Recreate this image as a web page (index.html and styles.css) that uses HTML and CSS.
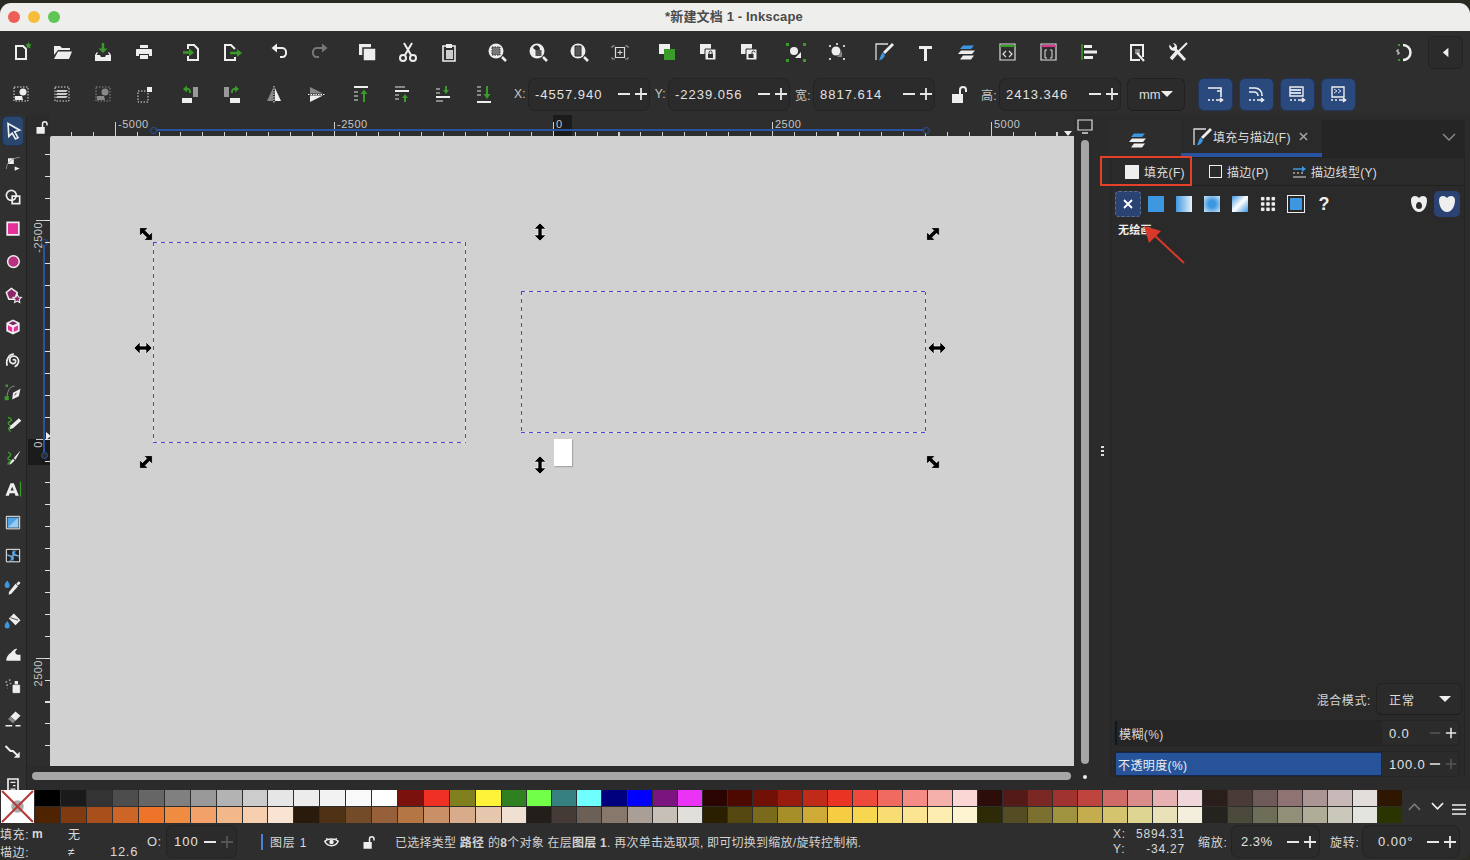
FILE: index.html
```html
<!DOCTYPE html>
<html lang="zh">
<head>
<meta charset="utf-8">
<title>Inkscape</title>
<link rel="stylesheet" href="styles.css">
</head>
<body>
<svg class="sprite" aria-hidden="true">
  <symbol id="minus" viewBox="0 0 14 14"><path d="M1 7h12" stroke="currentColor" stroke-width="1.800"/></symbol>
  <symbol id="plus" viewBox="0 0 14 14"><path d="M1 7h12M7 1v12" stroke="currentColor" stroke-width="1.800"/></symbol>
  <symbol id="caret" viewBox="0 0 12 8"><path d="M0 1h12L6 7z" fill="currentColor"/></symbol>
  <symbol id="harrow" viewBox="0 0 20 20"><path d="M1 10l6-6v4h6V4l6 6-6 6v-4H7v4z" fill="#000" stroke="#fff" stroke-width=".6"/></symbol>
  <symbol id="lock" viewBox="0 0 24 24"><path d="M6 12h11v9H6z" fill="#eee"/><path d="M14 12V8a3 3 0 0 1 6 0v2" fill="none" stroke="#eee" stroke-width="2"/></symbol>
  <symbol id="objects" viewBox="0 0 24 24"><path d="M6 9l3-3.500h11l-3 3.500z" fill="#3d97e0"/><path d="M4 14l3-3.500h14l-3 3.500z" fill="#eee"/><path d="M6 19.500l3-4h11l-3 4z" fill="#eee"/></symbol>
  <symbol id="fillstroke" viewBox="0 0 24 24"><path d="M16 4H4v16" fill="none" stroke="#ddd" stroke-width="1.300"/><path d="M20 3l2 2-9 9-2-2z" fill="#eee"/><path d="M10.500 12.500l2.500 2.500c-1 3-3 5-6 5.500 1-2 1.500-5.500 3.500-8z" fill="#3d97e0"/></symbol>
  <symbol id="bluepath" viewBox="0 0 24 24"><path d="M5 6h10l3 0v9M14 9h4v0" fill="none" stroke="#eee" stroke-width="1.600"/><path d="M5 18h2M9 18h2M13 18h6m-2-2l2.500 2-2.500 2" fill="none" stroke="#eee" stroke-width="1.600"/></symbol>
</svg>

<div class="window">
  <header class="titlebar">
    <div class="lights"><i class="light red"></i><i class="light yellow"></i><i class="light green"></i></div>
    <div class="title">*新建文档 1 - Inkscape</div>
  </header>

  <div class="toolbar tb1">
    <div class="grp">
      <span class="cell"><svg class="ic" viewBox="0 0 24 24"><path d="M7 6h7l3 3v10H7z" fill="#2e2e2e" stroke="#eee" stroke-width="2"/><path d="M19.500 2l1 2.200 2.300.3-1.700 1.600.4 2.400-2-1.100-2 1.100.4-2.400L16 4.500l2.300-.3z" fill="#3a9a2a"/></svg></span>
      <span class="cell"><svg class="ic" viewBox="0 0 24 24"><path d="M4 6h6l2 2h8v2H8l-4 5z" fill="#eee"/><path d="M8 11.500h14L19 19H4z" fill="#eee"/></svg></span>
      <span class="cell"><svg class="ic" viewBox="0 0 24 24"><path d="M12 3v8" stroke="#3a9a2a" stroke-width="2.500"/><path d="M7.500 8.500h9L12 13z" fill="#3a9a2a"/><path d="M6 12l-2 3v6h16v-6l-2-3-1 1 1.500 2H15l-1 2h-4l-1-2H5.500L7 13z" fill="#eee"/></svg></span>
      <span class="cell"><svg class="ic" viewBox="0 0 24 24"><path d="M8 5h8v3H8z" fill="#eee"/><path d="M5 9h14a1 1 0 0 1 1 1v6h-3v-2H7v2H4v-6a1 1 0 0 1 1-1z" fill="#eee"/><path d="M8 15h8v4H8z" fill="#eee"/></svg></span>
    </div>
    <div class="grp">
      <span class="cell"><svg class="ic" viewBox="0 0 24 24"><path d="M9 9V5h6l4 4v11H9v-4" fill="none" stroke="#eee" stroke-width="2"/><path d="M4 12.500h7" stroke="#3a9a2a" stroke-width="2.500"/><path d="M10 8.500l5 4-5 4z" fill="#3a9a2a"/></svg></span>
      <span class="cell"><svg class="ic" viewBox="0 0 24 24"><path d="M15 9V9l-4-4H5v15h10v-3" fill="none" stroke="#eee" stroke-width="2"/><path d="M10 13h8" stroke="#3a9a2a" stroke-width="2.500"/><path d="M17 9l5 4-5 4z" fill="#3a9a2a"/></svg></span>
    </div>
    <div class="grp">
      <span class="cell"><svg class="ic" viewBox="0 0 24 24"><path d="M9 8h6a4 4 0 0 1 4 4 4 4 0 0 1-4 5h-2" fill="none" stroke="#eee" stroke-width="2"/><path d="M10 3.500v9L4.500 8z" fill="#eee"/></svg></span>
      <span class="cell dim"><svg class="ic" viewBox="0 0 24 24"><path d="M15 8H9a4 4 0 0 0-4 4 4 4 0 0 0 4 5h2" fill="none" stroke="#777" stroke-width="2"/><path d="M14 3.500v9L19.500 8z" fill="#777"/></svg></span>
    </div>
    <div class="grp">
      <span class="cell"><svg class="ic" viewBox="0 0 24 24"><path d="M4 4h12v11H4z" fill="#eee"/><path d="M8 8h13v13H8z" fill="#eee" stroke="#2e2e2e" stroke-width="1.500"/></svg></span>
      <span class="cell"><svg class="ic" viewBox="0 0 24 24"><path d="M8 3l7 12M16 3L9 15" stroke="#eee" stroke-width="2"/><circle cx="7" cy="18" r="3" fill="none" stroke="#eee" stroke-width="2"/><circle cx="17" cy="18" r="3" fill="none" stroke="#eee" stroke-width="2"/></svg></span>
      <span class="cell"><svg class="ic" viewBox="0 0 24 24"><path d="M9 6H6v15h12V6h-3" fill="none" stroke="#eee" stroke-width="1.600"/><path d="M9 4h6v4H9z" fill="#eee"/><path d="M9 10h7v9H9z" fill="#ccc"/></svg></span>
    </div>
    <div class="grp">
      <span class="cell"><svg class="ic" viewBox="0 0 24 24"><circle cx="11" cy="11" r="7.500" fill="#eee"/><path d="M17 17l4 4" stroke="#eee" stroke-width="2.500"/><path d="M7 7h8v8H7z" fill="#777" stroke="#2e2e2e" stroke-dasharray="1.500 1"/></svg></span>
      <span class="cell"><svg class="ic" viewBox="0 0 24 24"><circle cx="11" cy="11" r="7.500" fill="#eee"/><path d="M17 17l4 4" stroke="#eee" stroke-width="2.500"/><path d="M7 8a3.500 3.500 0 1 1 5 4z" fill="#2e2e2e"/><path d="M9.500 10h6v6h-6z" fill="#555"/></svg></span>
      <span class="cell"><svg class="ic" viewBox="0 0 24 24"><circle cx="11" cy="11" r="7.500" fill="#eee"/><path d="M17 17l4 4" stroke="#eee" stroke-width="2.500"/><path d="M8 6h6v10H8z" fill="#555" stroke="#2e2e2e"/></svg></span>
      <span class="cell"><svg class="ic" viewBox="0 0 24 24"><path d="M7 6H4v2M17 6h3v2M7 19H4v-2M17 19h3v-2" fill="none" stroke="#999"/><path d="M7.500 7.500h9v10h-9z" fill="none" stroke="#ddd" stroke-width="1.200"/><path d="M12 10v5M9.500 12.500h5" stroke="#ddd"/></svg></span>
    </div>
    <div class="grp">
      <span class="cell"><svg class="ic" viewBox="0 0 24 24"><path d="M4 4h11v10H4z" fill="#eee"/><path d="M9 9h11v11H9z" fill="#3a9a2a"/></svg></span>
      <span class="cell"><svg class="ic" viewBox="0 0 24 24"><path d="M4 4h11v10H4z" fill="#eee"/><path d="M9 9h11v11H9z" fill="#eee" stroke="#2e2e2e"/><path d="M12 14h5v4h-5z" fill="#2e2e2e"/><path d="M13 14v-1.500a1.500 1.500 0 0 1 3 0V14" fill="none" stroke="#2e2e2e"/></svg></span>
      <span class="cell"><svg class="ic" viewBox="0 0 24 24"><path d="M4 4h11v10H4z" fill="#eee"/><path d="M9 9h11v11H9z" fill="#eee" stroke="#2e2e2e"/><path d="M11.500 14h5v4h-5z" fill="#2e2e2e"/><path d="M15 14v-1.500a1.500 1.500 0 0 1 3 0" fill="none" stroke="#2e2e2e"/></svg></span>
    </div>
    <div class="grp">
      <span class="cell"><svg class="ic" viewBox="0 0 24 24"><path d="M2 3h3v3H2zM19 3h3v3h-3zM2 19h3v3H2zM19 19h3v3h-3z" fill="#3a9a2a"/><circle cx="10" cy="11" r="4" fill="#eee"/><path d="M11 18l6-6v6z" fill="#eee"/></svg></span>
      <span class="cell"><svg class="ic" viewBox="0 0 24 24"><path d="M4 5h2v2H4zM18 5h2v2h-2zM4 18h2v2H4zM18 18h2v2h-2zM11 3h2v2h-2z" fill="#ccc"/><circle cx="11" cy="11" r="4.500" fill="#eee"/><path d="M12 17l5-6v6z" fill="#888"/></svg></span>
    </div>
    <div class="grp">
      <span class="cell"><svg class="ic" viewBox="0 0 24 24"><use href="#fillstroke"/></svg></span>
      <span class="cell"><svg class="ic" viewBox="0 0 24 24"><path d="M6 6h13v3h-5v12h-3V9H6z" fill="#eee"/></svg></span>
      <span class="cell"><svg class="ic" viewBox="0 0 24 24"><use href="#objects"/></svg></span>
      <span class="cell"><svg class="ic" viewBox="0 0 24 24"><path d="M5 4h15v16H5z" fill="none" stroke="#ddd" stroke-width="1.200"/><path d="M5 5h15v2H5z" fill="#3a9a2a"/><path d="M11 11l-3 3 3 3M14 11l3 3-3 3" fill="none" stroke="#ddd" stroke-width="1.200"/></svg></span>
      <span class="cell"><svg class="ic" viewBox="0 0 24 24"><path d="M5 4h15v16H5z" fill="none" stroke="#ddd" stroke-width="1.200"/><path d="M5 5h15v2H5z" fill="#e0348c"/><path d="M11 10H9v8h2M14 10h2v8h-2" fill="none" stroke="#ddd"/></svg></span>
      <span class="cell"><svg class="ic" viewBox="0 0 24 24"><path d="M5 4v16" stroke="#3a9a2a" stroke-width="1.500"/><path d="M7 5h8v3H7zM7 10.500h13v3H7zM7 16h9v3H7z" fill="#eee"/></svg></span>
    </div>
    <div class="grp">
      <span class="cell"><svg class="ic" viewBox="0 0 24 24"><path d="M15 20H6V5h12v12" fill="none" stroke="#eee" stroke-width="2"/><path d="M10 9h5v5h-5z" fill="#888"/><path d="M12 13l7 8" stroke="#eee" stroke-width="2"/></svg></span>
      <span class="cell"><svg class="ic" viewBox="0 0 24 24"><path d="M8 8l11 12" stroke="#eee" stroke-width="3"/><path d="M3.500 4.500a4.500 4.500 0 0 0 5.500 6l2-2a4.500 4.500 0 0 0-4-5.500l2 3-2.500 2z" fill="#eee"/><path d="M21 3l-10 10" stroke="#eee" stroke-width="2"/><path d="M11 12L5 19" stroke="#eee" stroke-width="3.500"/></svg></span>
    </div>
    <span class="tb-spring"></span>
    <span class="cell snap"><svg class="ic" viewBox="0 0 24 24"><path d="M11 5a7.500 7.500 0 1 1 0 15" fill="none" stroke="#eee" stroke-width="2.500"/><path d="M6 4h2v2H6zM6 19h2v2H6z" fill="#3a9a2a"/><path d="M7 10H5v2h2v2H5" fill="none" stroke="#ddd"/></svg></span>
    <span class="side-btn"><svg class="tri" viewBox="0 0 10 12"><path d="M8 0v12L1 6z" fill="#eee"/></svg></span>
  </div>

  <div class="toolbar tb2">
    <div class="grp">
      <span class="cell"><svg class="ic" viewBox="0 0 24 24"><path d="M5 5h14v14H5z" fill="none" stroke="#ddd" stroke-dasharray="1.500 1.500"/><circle cx="14" cy="10" r="3.500" fill="#eee"/><path d="M6 14h7l1 4H6z" fill="#eee"/></svg></span>
      <span class="cell"><svg class="ic" viewBox="0 0 24 24"><path d="M5 5h14v14H5z" fill="none" stroke="#ddd" stroke-dasharray="1.500 1.500"/><path d="M7 8h11l-2 2H6zM7 11h11l-2 2H6zM7 14h11l-2 2H6z" fill="#ccc"/></svg></span>
      <span class="cell dim"><svg class="ic" viewBox="0 0 24 24"><path d="M5 5h14v14H5z" fill="none" stroke="#888" stroke-dasharray="1.500 1.500"/><circle cx="14" cy="10" r="3.500" fill="#888"/><path d="M6 14h7l1 4H6z" fill="#888"/></svg></span>
      <span class="cell"><svg class="ic" viewBox="0 0 24 24"><path d="M6 9h10v11H6z" fill="none" stroke="#ddd" stroke-dasharray="1.500 1.500"/><path d="M15 5h5v5h-5z" fill="#eee"/></svg></span>
    </div>
    <div class="grp g-wide">
      <span class="cell c42"><svg class="ic" viewBox="0 0 24 24"><path d="M15 5h5v10h-5z" fill="#999"/><path d="M4 16h10v5H4z" fill="#eee"/><path d="M12 11V9.500A2.500 2.500 0 0 0 9 7" fill="none" stroke="#3a9a2a" stroke-width="2"/><path d="M9 3.500v7L5 7z" fill="#3a9a2a"/></svg></span>
      <span class="cell c42"><svg class="ic" viewBox="0 0 24 24"><path d="M4 5h5v10H4z" fill="#999"/><path d="M10 16h10v5H10z" fill="#eee"/><path d="M12 11V9.500A2.500 2.500 0 0 1 15 7" fill="none" stroke="#3a9a2a" stroke-width="2"/><path d="M15 3.500v7L19 7z" fill="#3a9a2a"/></svg></span>
      <span class="cell c42"><svg class="ic" viewBox="0 0 24 24"><path d="M11 6v13H5z" fill="#888"/><path d="M13 6v13h6z" fill="#eee"/><path d="M12 4v17" stroke="#eee" stroke-dasharray="1.500 1"/></svg></span>
      <span class="cell"><svg class="ic" viewBox="0 0 24 24"><path d="M6 5l13 6.500H6z" fill="#888"/><path d="M6 13.500h13L6 20z" fill="#eee"/><path d="M4 12.500h17" stroke="#eee" stroke-dasharray="1.500 1"/></svg></span>
    </div>
    <div class="grp">
      <span class="cell"><svg class="ic" viewBox="0 0 24 24"><path d="M5 4h14v2H5z" fill="#eee"/><path d="M5 9h4v2H5zM5 13h4v2H5zM5 17h4v2H5z" fill="#888"/><path d="M15 20v-9" stroke="#3a9a2a" stroke-width="2"/><path d="M11.500 12L15 7.500l3.500 4.500z" fill="#3a9a2a"/></svg></span>
      <span class="cell"><svg class="ic" viewBox="0 0 24 24"><path d="M5 8h14v2H5z" fill="#eee"/><path d="M5 4h10v2H5zM5 12h4v2H5zM5 16h4v2H5z" fill="#888"/><path d="M15 20v-5" stroke="#3a9a2a" stroke-width="2"/><path d="M12 16l3-4 3 4z" fill="#3a9a2a"/></svg></span>
      <span class="cell"><svg class="ic" viewBox="0 0 24 24"><path d="M5 14h14v2H5z" fill="#eee"/><path d="M5 6h4v2H5zM5 10h4v2H5zM5 18h7v2H5z" fill="#888"/><path d="M15 4v5" stroke="#3a9a2a" stroke-width="2"/><path d="M12 8l3 4 3-4z" fill="#3a9a2a"/></svg></span>
      <span class="cell"><svg class="ic" viewBox="0 0 24 24"><path d="M5 19h14v2H5z" fill="#eee"/><path d="M5 4h4v2H5zM5 8h4v2H5zM5 12h4v2H5z" fill="#888"/><path d="M15 4v9" stroke="#3a9a2a" stroke-width="2"/><path d="M11.500 12l3.500 5 3.500-5z" fill="#3a9a2a"/></svg></span>
    </div>
    <span class="flabel fl-x">X:</span>
    <div class="spin sp-coord"><span class="val">-4557.940</span><svg class="pm"><use href="#minus"/></svg><svg class="pm"><use href="#plus"/></svg></div>
    <span class="flabel fl-y">Y:</span>
    <div class="spin sp-coord"><span class="val">-2239.056</span><svg class="pm"><use href="#minus"/></svg><svg class="pm"><use href="#plus"/></svg></div>
    <span class="flabel fl-w">宽:</span>
    <div class="spin sp-coord"><span class="val">8817.614</span><svg class="pm"><use href="#minus"/></svg><svg class="pm"><use href="#plus"/></svg></div>
    <span class="lockcell"><svg class="ic"><use href="#lock"/></svg></span>
    <span class="flabel fl-h">高:</span>
    <div class="spin sp-coord"><span class="val">2413.346</span><svg class="pm"><use href="#minus"/></svg><svg class="pm"><use href="#plus"/></svg></div>
    <div class="dropdown dd-mm"><span>mm</span><svg class="caret"><use href="#caret"/></svg></div>
    <div class="bluebtns">
      <span class="bluebtn"><svg class="ic" viewBox="0 0 24 24"><use href="#bluepath"/></svg></span>
      <span class="bluebtn"><svg class="ic" viewBox="0 0 24 24"><path d="M5 6h6a7 7 0 0 1 7 7v1M5 10h5a4 4 0 0 1 4 4" fill="none" stroke="#eee" stroke-width="1.600"/><path d="M5 18h2M9 18h2M13 18h6m-2-2l2.500 2-2.500 2" fill="none" stroke="#eee" stroke-width="1.600"/></svg></span>
      <span class="bluebtn"><svg class="ic" viewBox="0 0 24 24"><path d="M5 5h13v9H5z" fill="none" stroke="#eee" stroke-width="1.400"/><path d="M5 7h11v2H5zM5 10h11v2H5z" fill="#cfd8e8"/><path d="M5 18h2M9 18h2M13 18h6m-2-2l2.500 2-2.500 2" fill="none" stroke="#eee" stroke-width="1.600"/></svg></span>
      <span class="bluebtn"><svg class="ic" viewBox="0 0 24 24"><path d="M6 5h12v10H6z" fill="none" stroke="#eee" stroke-width="1.400"/><path d="M8 7l3 2-3 2M12 7l3 2-3 2" fill="none" stroke="#cfd8e8"/><path d="M5 18h2M9 18h2M13 18h6m-2-2l2.500 2-2.500 2" fill="none" stroke="#eee" stroke-width="1.600"/></svg></span>
    </div>
  </div>

  <div class="middle">
    <nav class="toolbox">
      <span class="tool active"><svg class="ic" viewBox="0 0 24 24"><path d="M6 3l14 8-6 2 4 7-3 1.500-4-7-4 4z" fill="#1f3a66" stroke="#eee" stroke-width="2"/></svg></span>
      <span class="tool"><svg class="ic" viewBox="0 0 24 24"><path d="M6 5h7v7H6z" fill="#eee"/><path d="M4 18c0-7 6-13 16-14" fill="none" stroke="#999"/><path d="M14 15l6 2.500-6 2.500z" fill="#eee"/></svg></span>
      <span class="tool"><svg class="ic" viewBox="0 0 24 24"><circle cx="10" cy="10" r="6" fill="none" stroke="#eee" stroke-width="2"/><path d="M11 11h9v9h-9z" fill="none" stroke="#eee" stroke-width="2"/></svg></span>
      <span class="tool"><svg class="ic" viewBox="0 0 24 24"><path d="M5 4h14v15H5z" fill="#e7319a" stroke="#eee" stroke-width="2"/></svg></span>
      <span class="tool"><svg class="ic" viewBox="0 0 24 24"><circle cx="12.500" cy="11.500" r="7" fill="#b93080" stroke="#eee" stroke-width="1.800"/></svg></span>
      <span class="tool"><svg class="ic" viewBox="0 0 24 24"><path d="M10 4l7 5-3 8H7L4 9z" fill="#8c2768" stroke="#eee" stroke-width="1.800"/><path d="M17 11l1.500 3.500 3.500.5-2.500 2.500.6 3.500-3.100-1.700-3.100 1.700.6-3.500L12 15l3.500-.5z" fill="#8c2768" stroke="#eee" stroke-width="1.300"/></svg></span>
      <span class="tool"><svg class="ic" viewBox="0 0 24 24"><path d="M12 3l8 4v10l-8 4-8-4V7z" fill="#eee"/><path d="M12 5l5 2.500-5 2.500-5-2.500z" fill="#7d2560"/><path d="M6 10l5 2.500V18l-5-2.500zM18 10l-5 2.500V18l5-2.500z" fill="#e7319a"/></svg></span>
      <span class="tool"><svg class="ic" viewBox="0 0 24 24"><path d="M12 12.500c1-2 4-.5 3 2-1.500 3-7 2-7-2.500 0-5 6-6 9-3 3 3.500 2 9-3 11M5 19C3 12 7 5 13 5" fill="none" stroke="#eee" stroke-width="2"/></svg></span>
      <span class="tool"><svg class="ic" viewBox="0 0 24 24"><path d="M5 18c0-7 3-13 9-13" fill="none" stroke="#999"/><path d="M2 17h5v5H2zM3 3h3v3H3z" fill="#3a9a2a"/><path d="M21 8l-2 9-8 4 1-8z" fill="#eee"/><path d="M14 16l2-3" stroke="#2e2e2e"/></svg></span>
      <span class="tool"><svg class="ic" viewBox="0 0 24 24"><path d="M6 3c4 1 6 3 2 5s0 5 3 5-6 1-4 4 2 3 2 3" fill="none" stroke="#3a9a2a" stroke-width="1.600"/><path d="M19 4l3 3-10 9-4 1 1-4z" fill="#eee"/></svg></span>
      <span class="tool"><svg class="ic" viewBox="0 0 24 24"><path d="M6 5c4 2 4 4 1 6s0 3 3 4-5 1-4 5" fill="none" stroke="#3a9a2a" stroke-width="1.600"/><path d="M21 3l-8 9 2 2zM12 13l2 2-4 4-3 1 2-3z" fill="#eee"/></svg></span>
      <span class="tool"><svg class="ic" viewBox="0 0 24 24"><path d="M9 4h4l6 15h-4l-1-3H8l-1 3H3zM9 12.500h4L11 8z" fill="#eee" fill-rule="evenodd"/><path d="M21 2v18" stroke="#3a9a2a" stroke-width="1.500"/></svg></span>
      <span class="tool"><svg class="ic" viewBox="0 0 24 24"><path d="M4 4h16v15H4z" fill="#2e2e2e" stroke="#eee" stroke-width="1.200"/><rect x="5.500" y="5.500" width="13" height="12" fill="#4fa4e8"/><path d="M5.500 17.500h13v-12z" fill="#d4e8f7" opacity=".55"/></svg></span>
      <span class="tool"><svg class="ic" viewBox="0 0 24 24"><path d="M4 4h16v15H4z" fill="#222" stroke="#eee" stroke-width="1.200"/><path d="M12 11c-3-4 1-6 5-6-3 1-3 4-1 5s3 3 3 5c-1-3-4-4-7-4zM12 12c3 4-1 6-5 6 3-1 3-4 1-5s-3-3-3-5c1 3 4 4 7 4z" fill="#3d97e0"/><path d="M4 11.500h16M12 4v15" stroke="#eee" stroke-width=".5"/></svg></span>
      <span class="tool"><svg class="ic" viewBox="0 0 24 24"><path d="M5 3c2 3 3 4 3 6a3 3 0 0 1-6 0c0-2 1-3 3-6z" fill="#3d97e0"/><path d="M19 4l2 2-3 3-2-2zM15 7l3 3-8 9-3 1 0-3z" fill="#eee"/></svg></span>
      <span class="tool"><svg class="ic" viewBox="0 0 24 24"><path d="M13 3l8 8-6 6-8-8z" fill="#eee"/><path d="M9 8l9 3" stroke="#2e2e2e"/><path d="M5 12c2 3 3 4 3 6a3 3 0 0 1-6 0c0-2 1-3 3-6z" fill="#3d97e0"/></svg></span>
      <span class="tool"><svg class="ic" viewBox="0 0 24 24"><path d="M4 20c0-6 4-8 6-10 2-3 6-5 7-4-1 2-3 2-2 5 1 2 4 2 6 2v7z" fill="#eee"/></svg></span>
      <span class="tool"><svg class="ic" viewBox="0 0 24 24"><path d="M3 6h2v2H3zM7 4h2v2H7zM4 10h2v2H4zM8 8h2v2H8zM5 14h1v1H5z" fill="#999"/><path d="M12 11h8v9h-8z" fill="#eee" stroke="#eee"/><path d="M14 6h4v4h-4z" fill="#eee"/></svg></span>
      <span class="tool"><svg class="ic" viewBox="0 0 24 24"><path d="M15 3l6 5-6 6-6-5z" fill="#eee"/><path d="M9 9l6 5-3 3-6-5z" fill="#888"/><path d="M3 20h8M15 20h6" stroke="#eee" stroke-width="1.800"/></svg></span>
      <span class="tool"><svg class="ic" viewBox="0 0 24 24"><path d="M3 6l6 6h3l5 5" fill="none" stroke="#eee" stroke-width="2.400"/><path d="M20 13v7h-7z" fill="#eee"/></svg></span>
      <span class="tool"><svg class="ic" viewBox="0 0 24 24"><path d="M6 22V6h12v16" fill="none" stroke="#eee" stroke-width="2"/><path d="M9 10h6M12 14h3M9 18h6" stroke="#eee" stroke-width="1.500"/></svg></span>
    </nav>

    <div class="workspace">
      <div class="corner"><svg class="ic-sm" viewBox="0 0 24 24"><use href="#lock"/></svg></div>
      <div class="ruler-top">
        <span class="zero-h"></span>
        <span class="major mj1"></span><span class="major mj2"></span><span class="major mj3"></span><span class="major mj4"></span><span class="major mj5"></span>
        <span class="rtext rt1">-5000</span><span class="rtext rt2">-2500</span><span class="rtext rt3">0</span><span class="rtext rt4">2500</span><span class="rtext rt5">5000</span>
        <span class="sel-h"></span><i class="knob kh1"></i><i class="knob kh2"></i>
        <span class="mark-top"></span>
      </div>
      <div class="monitor"><svg class="ic" viewBox="0 0 24 24"><path d="M5 5h14v10H5z" fill="none" stroke="#ddd" stroke-width="1.200"/><path d="M9 18h6" stroke="#ddd" stroke-width="1.500"/></svg></div>
      <div class="ruler-left">
        <span class="zero-v"></span>
        <span class="majorv mv1"></span><span class="majorv mv2"></span><span class="majorv mv3"></span>
        <span class="vtext vt1">-2500</span><span class="vtext vt2">0</span><span class="vtext vt3">2500</span>
        <span class="sel-v"></span><i class="knob kv1"></i><i class="knob kv2"></i>
        <span class="mark-left"></span>
        <span class="vticks"></span>
      </div>
      <main class="canvas">
        <div class="sel sel1"></div>
        <div class="sel sel2"></div>
        <div class="page"></div>
        <svg class="handle hd-nw r45"><use href="#harrow"/></svg>
        <svg class="handle hd-n r90"><use href="#harrow"/></svg>
        <svg class="handle hd-ne rn45"><use href="#harrow"/></svg>
        <svg class="handle hd-w"><use href="#harrow"/></svg>
        <svg class="handle hd-e"><use href="#harrow"/></svg>
        <svg class="handle hd-sw rn45"><use href="#harrow"/></svg>
        <svg class="handle hd-s r90"><use href="#harrow"/></svg>
        <svg class="handle hd-se r45"><use href="#harrow"/></svg>
      </main>
      <div class="vscroll-col"><span class="vthumb"></span><span class="grip"></span></div>
      <div class="hscroll-row"><span class="hthumb"></span><span class="sdot"></span></div>
    </div>

    <aside class="dock">
      <div class="dock-tabs">
        <span class="dtab dtab-icon"><svg class="ic" viewBox="0 0 24 24"><use href="#objects"/></svg></span>
        <span class="dtab dtab-active"><svg class="ic" viewBox="0 0 24 24"><use href="#fillstroke"/></svg><span>填充与描边(F)</span><svg class="xclose" viewBox="0 0 10 10"><path d="M1 1l8 8M9 1l-8 8" stroke="#aaa" stroke-width="1.500"/></svg></span>
        <span class="dock-fill"><svg class="chev" viewBox="0 0 14 8"><path d="M1 1l6 6 6-6" fill="none" stroke="#888" stroke-width="1.500"/></svg></span>
      </div>
      <div class="pane">
        <div class="subtabs">
          <span class="stab st1"><i class="sq-fill"></i>填充(F)</span>
          <span class="stab st2"><i class="sq-stroke"></i>描边(P)</span>
          <span class="stab st3"><svg class="st-ic" viewBox="0 0 14 12"><path d="M1 11h13" stroke="#ddd" stroke-width="1.200"/><path d="M1 7h2M5 7h2M9 7h2" stroke="#eee" stroke-width="1.200"/><path d="M1 3h10" stroke="#3d97e0" stroke-width="1.300"/><path d="M10 0l4 3-4 3z" fill="#3d97e0"/></svg>描边线型(Y)</span>
        </div>
        <div class="modes">
          <span class="mode-x"><svg viewBox="0 0 10 10" class="mx"><path d="M1 1l8 8M9 1l-8 8" stroke="#fff" stroke-width="1.800"/></svg></span>
          <span class="mode"><i class="pm-flat"></i></span>
          <span class="mode"><i class="pm-linear"></i></span>
          <span class="mode"><i class="pm-radial"></i></span>
          <span class="mode"><i class="pm-mesh"></i></span>
          <span class="mode"><i class="pm-pattern"></i></span>
          <span class="mode"><i class="pm-swatch"></i></span>
          <span class="mode pm-unset">?</span>
          <span class="mode-spring"></span>
          <span class="rule-a"><svg class="rule-ic" viewBox="0 0 20 20"><path fill-rule="evenodd" d="M10 4c2-3 8-3 8 2 0 6-3 12-8 12S2 12 2 6c0-5 6-5 8-2zM10 8c-2 0-3 2-3 4s1 3 3 3 3-1 3-3-1-4-3-4z" fill="#eee"/></svg></span>
          <span class="rule-b"><svg class="rule-ic" viewBox="0 0 20 20"><path d="M10 4c2-3 8-3 8 2 0 6-3 12-8 12S2 12 2 6c0-5 6-5 8-2z" fill="#eee"/></svg></span>
        </div>
        <div class="nopaint">无绘画</div>
        <div class="pane-spring"></div>
        <div class="blend">
          <span class="blend-label">混合模式:</span>
          <div class="dropdown dd-blend"><span>正常</span><svg class="caret"><use href="#caret"/></svg></div>
        </div>
        <div class="slider">
          <div class="slide-bar bar-off"><span>模糊(%)</span></div>
          <span class="slide-val">0.0</span>
          <svg class="pm off"><use href="#minus"/></svg><svg class="pm"><use href="#plus"/></svg>
        </div>
        <div class="slider">
          <div class="slide-bar bar-on"><span>不透明度(%)</span></div>
          <span class="slide-val">100.0</span>
          <svg class="pm"><use href="#minus"/></svg><svg class="pm off"><use href="#plus"/></svg>
        </div>
      </div>
      <div class="red-box"></div>
      <svg class="red-arrow" viewBox="0 0 44 40"><path d="M41 37L10 8" stroke="#d8392b" stroke-width="2"/><path d="M1 0l17 5L6 17z" fill="#d8392b"/></svg>
    </aside>
  </div>

  <div class="palette">
    <div class="no-color"><svg class="nc" viewBox="0 0 32 32"><circle cx="16" cy="16" r="6" fill="#aaa"/><path d="M1 1l30 30M31 1L1 31" stroke="#b53a3a" stroke-width="2"/></svg></div>
    <div class="swatches">
      <i style="background:#000"></i><i style="background:#1a1a1a"></i><i style="background:#333"></i><i style="background:#4d4d4d"></i><i style="background:#666"></i><i style="background:#808080"></i><i style="background:#999"></i><i style="background:#b3b3b3"></i><i style="background:#ccc"></i><i style="background:#e6e6e6"></i><i style="background:#ececec"></i><i style="background:#f2f2f2"></i><i style="background:#f9f9f9"></i><i style="background:#fff"></i><i style="background:#7a110c"></i><i style="background:#ee3124"></i><i style="background:#80801f"></i><i style="background:#fff33a"></i><i style="background:#2f8020"></i><i style="background:#72ff48"></i><i style="background:#378080"></i><i style="background:#70ffff"></i><i style="background:#00007f"></i><i style="background:#00f"></i><i style="background:#7a1580"></i><i style="background:#ea33f5"></i><i style="background:#2a0400"></i><i style="background:#4d0800"></i><i style="background:#701007"></i><i style="background:#991b0e"></i><i style="background:#c02a18"></i><i style="background:#ea3323"></i><i style="background:#ee4a3c"></i><i style="background:#f06a60"></i><i style="background:#f48c85"></i><i style="background:#f6b0ac"></i><i style="background:#fad6d4"></i><i style="background:#2d0d0a"></i><i style="background:#541a18"></i><i style="background:#7b2824"></i><i style="background:#a0332f"></i><i style="background:#c0443e"></i><i style="background:#cf6a66"></i><i style="background:#da8c8a"></i><i style="background:#e6b1b0"></i><i style="background:#f0d8da"></i><i style="background:#2a1e1a"></i><i style="background:#4a3a38"></i><i style="background:#6e5a58"></i><i style="background:#8f7272"></i><i style="background:#ab9594"></i><i style="background:#c8b8b8"></i><i style="background:#e2dcda"></i><i style="background:#2e1600"></i>
      <i style="background:#4f2200"></i><i style="background:#7f3a10"></i><i style="background:#a84f1c"></i><i style="background:#cc6526"></i><i style="background:#ee742a"></i><i style="background:#ef8c42"></i><i style="background:#f2a268"></i><i style="background:#f3b88a"></i><i style="background:#f5cfae"></i><i style="background:#f9e3d3"></i><i style="background:#2a1a0c"></i><i style="background:#4f3216"></i><i style="background:#734b28"></i><i style="background:#95603a"></i><i style="background:#b57646"></i><i style="background:#c99068"></i><i style="background:#d8ab8a"></i><i style="background:#e5c7ae"></i><i style="background:#f0e0d2"></i><i style="background:#231e1a"></i><i style="background:#453b36"></i><i style="background:#6b5f56"></i><i style="background:#88786c"></i><i style="background:#a99f96"></i><i style="background:#c6c0b9"></i><i style="background:#e2ded9"></i><i style="background:#2a2000"></i><i style="background:#54470f"></i><i style="background:#7a6a1c"></i><i style="background:#a68f28"></i><i style="background:#cdab36"></i><i style="background:#f6cd42"></i><i style="background:#f7d650"></i><i style="background:#f8dd72"></i><i style="background:#fbe592"></i><i style="background:#fdedb0"></i><i style="background:#fdf5d2"></i><i style="background:#2d2a08"></i><i style="background:#544c22"></i><i style="background:#7b7030"></i><i style="background:#a09340"></i><i style="background:#c5ac4c"></i><i style="background:#d5c46e"></i><i style="background:#dfd592"></i><i style="background:#e8e0b6"></i><i style="background:#f3efdc"></i><i style="background:#25231d"></i><i style="background:#4c4a3a"></i><i style="background:#6e6e58"></i><i style="background:#918f75"></i><i style="background:#afad97"></i><i style="background:#c9c8bb"></i><i style="background:#e4e4de"></i><i style="background:#2a3400"></i>
    </div>
    <div class="pal-ctrl">
      <svg class="pal-chev pc-up" viewBox="0 0 14 8"><path d="M1 7l6-6 6 6" fill="none" stroke="#777" stroke-width="1.800"/></svg>
      <svg class="pal-chev pc-down" viewBox="0 0 14 8"><path d="M1 1l6 6 6-6" fill="none" stroke="#eee" stroke-width="1.800"/></svg>
      <svg class="pal-menu" viewBox="0 0 14 12"><path d="M0 1.500h14M0 6h14M0 10.500h14" stroke="#eee" stroke-width="1.600"/></svg>
    </div>
  </div>

  <footer class="status">
    <div class="fs-ind">
      <div class="fs-row"><span class="fs-l">填充:</span><b class="fs-m">m</b><span class="fs-v">无</span></div>
      <div class="fs-row"><span class="fs-l">描边:</span><span class="fs-m"></span><span class="fs-v">≠</span><span class="fs-w">12.6</span></div>
    </div>
    <span class="st-o">O:</span>
    <div class="spin sp-op"><span class="val">100</span><svg class="pm"><use href="#minus"/></svg><svg class="pm off"><use href="#plus"/></svg></div>
    <i class="layer-bar"></i>
    <span class="layer-name">图层 1</span>
    <svg class="eye" viewBox="0 0 20 14"><path d="M1 6c4-4 14-4 18 0-4 8-14 8-18 0z" fill="none" stroke="#eee" stroke-width="2"/><circle cx="10" cy="7" r="3" fill="#eee"/><path d="M3 2l2 2M17 2l-2 2" stroke="#eee" stroke-width="1.500"/></svg>
    <svg class="st-lock" viewBox="0 0 24 24"><use href="#lock"/></svg>
    <span class="msg">已选择类型 <b>路径</b> 的<b>8</b>个对象 在层<b>图层 1</b>. 再次单击选取项, 即可切换到缩放/旋转控制柄.</span>
    <span class="st-spring"></span>
    <div class="coords">
      <div class="co-row"><span>X:</span><span>5894.31</span></div>
      <div class="co-row"><span>Y:</span><span>-34.27</span></div>
    </div>
    <span class="st-lab lab-zoom">缩放:</span>
    <div class="spin sp-zoom"><span class="val">2.3%</span><svg class="pm"><use href="#minus"/></svg><svg class="pm"><use href="#plus"/></svg></div>
    <span class="st-lab lab-rot">旋转:</span>
    <div class="spin sp-rot"><span class="val">0.00°</span><svg class="pm"><use href="#minus"/></svg><svg class="pm"><use href="#plus"/></svg></div>
  </footer>
</div>
</body>
</html>
```
FILE: styles.css
```css
* { box-sizing: border-box; }
html, body { margin: 0; padding: 0; height: 100%; background: #2a2a22; overflow: hidden; }
body { font-family: "Liberation Sans", "Noto Sans CJK SC", sans-serif; color: #d8d8d8; font-size: 12px; }
.sprite { position: absolute; width: 0; height: 0; }
.window { width: 1470px; height: 857px; margin-top: 3px; background: #2e2e2e; border-radius: 11px 11px 10px 10px; overflow: hidden; display: flex; flex-direction: column; }

.titlebar { height: 28px; flex: none; background: #eeeeec; display: flex; align-items: center; justify-content: center; position: relative; padding-bottom: 3px; }
.lights { position: absolute; left: 8px; top: 8px; display: flex; gap: 8px; }
.light { width: 12px; height: 12px; border-radius: 50%; display: block; }
.red { background: #ee5f58; } .yellow { background: #f6bd3b; } .green { background: #5fc653; }
.title { font-size: 13px; font-weight: 700; color: #4a4a4a; letter-spacing: .15px; margin-right: 2px; }

.toolbar { flex: none; height: 42px; display: flex; align-items: center; background: #2e2e2e; }
.grp { display: flex; align-items: center; }
.tb1 .grp + .grp { margin-left: 6.25px; }
.cell { width: 41px; height: 32px; display: flex; align-items: center; justify-content: center; flex: none; }
.c42 { width: 42px; }
.ic { width: 24px; height: 24px; display: block; flex: none; }
.tb-spring { flex: 1; }
.snap { margin-right: 4px; }
.side-btn { width: 35px; height: 33px; margin-right: 7px; border-radius: 6px; background: #2b2b2b; border: 1px solid #222; display: flex; align-items: center; justify-content: center; }
.tri { width: 8px; height: 11px; }

.tb2 .g-wide { margin-left: 5px; }
.tb2 .g-wide + .grp { margin-left: 4px; }
.flabel { flex: none; font-size: 12px; color: #c9c9c9; text-align: right; padding-right: 2px; letter-spacing: .3px; }
.fl-x { width: 24px; }
.fl-y { width: 18px; }
.fl-w { width: 23px; }
.fl-h { width: 18px; }
.lockcell { width: 46px; display: flex; justify-content: center; flex: none; }
.spin { flex: none; display: flex; align-items: center; height: 33px; background: #2b2b2b; border: 1px solid #232323; border-radius: 7px; }
.sp-coord { width: 122px; padding: 0 0 0 6px; }
.val { flex: 1; font-size: 13px; letter-spacing: 1px; color: #e2e2e2; white-space: nowrap; }
.pm { width: 14px; height: 14px; margin: 0 1.500px; color: #e8e8e8; flex: none; }
.pm.off { color: #555; }
.dropdown { flex: none; display: flex; align-items: center; justify-content: space-between; background: #2b2b2b; border: 1px solid #222; border-bottom-color: #1d1d1d; border-radius: 6px; color: #ddd; font-size: 12px; }
.dd-mm { width: 58px; height: 33px; margin-left: 6px; padding: 0 11px; font-size: 13px; }
.caret { width: 12px; height: 8px; color: #eee; }
.bluebtns { display: flex; gap: 6.500px; margin-left: 13px; }
.bluebtn { width: 34.500px; height: 33px; background: #2a4a7e; border: 1px solid #223558; border-radius: 6px; display: flex; align-items: center; justify-content: center; }

.middle { flex: none; height: 675px; display: flex; position: relative; }
.toolbox { width: 27px; flex: none; background: #303030; border-right: 1px solid #232323; overflow: hidden; display: flex; flex-direction: column; }
.tool { flex: none; height: 32.650px; display: flex; align-items: center; justify-content: center; }
.tool .ic { width: 20px; height: 20px; }
.tool.active { background: #29476f; border-radius: 5px; margin: 1px 2px 2px; height: 29.650px; border: 1px solid #1e3555; }

.workspace { width: 1081px; flex: none; display: grid; grid-template-columns: 23px 1024px 34px; grid-template-rows: 21px 630px 24px; background: #2b2b2b; }
.corner { display: flex; align-items: center; justify-content: center; padding-left: 5px; padding-top: 3px; }
.ic-sm { width: 18px; height: 18px; }
.ruler-top { position: relative; overflow: hidden; background-color: #2e2e2e; background-image: repeating-linear-gradient(90deg, #cfcfcf 0 1px, transparent 1px 21.900px); background-position: 21px 17px; background-size: 100% 4px; background-repeat: no-repeat; }
.zero-h { position: absolute; left: 503px; top: 0; width: 19px; height: 21px; background: #1b1b1b; }
.major { position: absolute; top: 7px; width: 1px; height: 14px; background: #cfcfcf; }
.mj1 { left: 65px; } .mj2 { left: 284px; } .mj3 { left: 503px; } .mj4 { left: 722px; } .mj5 { left: 941px; }
.rtext { position: absolute; top: 3px; font-size: 11px; color: #c4c4c4; letter-spacing: .5px; }
.rt1 { left: 68px; } .rt2 { left: 287px; } .rt3 { left: 506px; } .rt4 { left: 725px; } .rt5 { left: 944px; }
.sel-h { position: absolute; left: 103px; top: 14px; width: 773px; height: 2px; background: #2753a0; }
.knob { position: absolute; width: 7px; height: 7px; border-radius: 50%; border: 1.500px solid #2753a0; background: #2e2e2e; }
.kh1 { left: 100px; top: 11.500px; } .kh2 { left: 873px; top: 11.500px; }
.mark-top { position: absolute; left: 1014px; top: 16px; border: 4px solid transparent; border-top: 5px solid #eee; border-bottom: 0; }
.monitor { display: flex; align-items: center; justify-content: center; padding: 2px 0 0 0; width: 22px; }

.ruler-left { position: relative; overflow: hidden; background-color: #2e2e2e; }
.vticks { position: absolute; right: 0; top: 18px; bottom: 0; width: 5px; background-image: repeating-linear-gradient(180deg, #e0e0e0 0 1px, transparent 1px 21.900px); }
.zero-v { position: absolute; left: 1px; top: 303px; width: 22px; height: 26px; background: #1b1b1b; }
.majorv { position: absolute; left: 9px; width: 14px; height: 1px; background: #cfcfcf; }
.mv1 { top: 84px; } .mv2 { top: 303px; } .mv3 { top: 522px; }
.vtext { position: absolute; left: 5px; font-size: 11px; color: #c4c4c4; writing-mode: vertical-rl; transform: rotate(180deg); letter-spacing: .5px; line-height: 13px; }
.vt1 { top: 86px; } .vt2 { top: 305px; } .vt3 { top: 524px; }
.sel-v { position: absolute; left: 16px; top: 106px; width: 2px; height: 213px; background: #2753a0; }
.kv1 { left: 13.500px; top: 103px; } .kv2 { left: 13.500px; top: 316px; }
.mark-left { position: absolute; left: 19px; top: 296px; border: 4px solid transparent; border-left: 5px solid #eee; border-right: 0; }

.canvas { position: relative; background: #d1d1d1; border-radius: 2px 0 0 0; overflow: hidden; }
.sel { position: absolute;
  background-image:
    repeating-linear-gradient(90deg, #4e47d0 0 4px, #e4e4e4 4px 8px),
    repeating-linear-gradient(90deg, #4e47d0 0 4px, #e4e4e4 4px 8px),
    repeating-linear-gradient(180deg, #4e47d0 0 4px, #e4e4e4 4px 8px),
    repeating-linear-gradient(180deg, #4e47d0 0 4px, #e4e4e4 4px 8px);
  background-size: 100% 1px, 100% 1px, 1px 100%, 1px 100%;
  background-position: 0 0, 0 100%, 0 0, 100% 0;
  background-repeat: no-repeat; }
.sel1 { left: 103px; top: 106px; width: 313px; height: 201px; }
.sel2 { left: 471px; top: 155px; width: 405px; height: 142px; }
.page { position: absolute; left: 504px; top: 303px; width: 18px; height: 27px; background: #fff; box-shadow: 1px 1px 1px #a8a8a8; }
.handle { position: absolute; width: 20px; height: 20px; margin: -10px 0 0 -10px; }
.r45 { transform: rotate(45deg); } .rn45 { transform: rotate(-45deg); } .r90 { transform: rotate(90deg); }
.hd-nw { left: 96px; top: 98px; } .hd-n { left: 490px; top: 96px; } .hd-ne { left: 883px; top: 98px; }
.hd-w { left: 93px; top: 212px; } .hd-e { left: 887px; top: 212px; }
.hd-sw { left: 96px; top: 326px; } .hd-s { left: 490px; top: 329px; } .hd-se { left: 883px; top: 326px; }

.vscroll-col { position: relative; }
.vthumb { display: block; width: 8px; height: 624px; margin: 4px 0 0 7px; border-radius: 4px; background: #a6a6a6; }
.grip { position: absolute; left: 27px; top: 309px; width: 3px; height: 11px; background: radial-gradient(circle, #ddd 1.300px, transparent 1.500px) 0 0 / 3px 4px; }
.hscroll-row { grid-column: 1 / 4; display: flex; align-items: flex-start; padding: 6px 0 0 5px; }
.hthumb { width: 1039px; height: 8px; border-radius: 4px; background: #a6a6a6; }
.sdot { width: 4px; height: 4px; margin: 3px 0 0 12px; border-radius: 50%; background: #eee; }

.dock { flex: 1; position: relative; padding: 5px 5px 13px 0; background: #2b2b2b; display: flex; flex-direction: column; }
.dock-tabs { flex: none; height: 37px; display: flex; background: #252525; }
.dtab { display: flex; align-items: center; flex: none; }
.dtab-icon { width: 73px; justify-content: center; background: #2d2d2d; padding-right: 15px; padding-top: 2px; }
.dtab-active { width: 141px; background: #2a2a2a; border-bottom: 4px solid #2753a0; padding: 0 0 0 9px; font-size: 12px; letter-spacing: .3px; color: #ddd; }
.dtab-active > span { margin-left: -1px; }
.xclose { width: 9px; height: 9px; margin-left: 8px; }
.dock-fill { flex: 1; display: flex; justify-content: flex-end; align-items: center; padding: 0 9px 4px 0; }
.chev { width: 14px; height: 8px; }
.pane { flex: 1; margin-left: 2px; background: #2a2a2a; border: 1px solid #242424; border-top-color: #222; border-bottom: 0; display: flex; flex-direction: column; min-height: 0; }
.subtabs { flex: none; height: 28px; border-bottom: 1px solid #212121; position: relative; display: flex; }
.stab { position: absolute; top: 0; height: 27px; display: flex; align-items: center; font-size: 12px; letter-spacing: .3px; color: #ddd; white-space: nowrap; }
.st1 { left: 14px; } .st2 { left: 98px; } .st3 { left: 181px; }
.sq-fill { width: 14px; height: 14px; background: #eee; margin-right: 5px; }
.sq-stroke { width: 13px; height: 13px; border: 1.500px solid #eee; margin-right: 5px; }
.st-ic { width: 14px; height: 12px; margin-right: 5px; }
.modes { flex: none; height: 28px; margin-top: 4px; display: flex; align-items: center; padding: 0 4px; }
.mode-x { width: 26px; height: 26px; background: #2a4373; border: 1px dashed #5d7090; border-radius: 4px; display: flex; align-items: center; justify-content: center; flex: none; }
.mx { width: 10px; height: 10px; }
.mode { width: 28px; height: 26px; display: flex; align-items: center; justify-content: center; flex: none; }
.mode:nth-child(2) { margin-left: 1px; }
.mode i { width: 16px; height: 16px; display: block; }
.pm-flat { background: #3d97e0; }
.pm-linear { background: linear-gradient(90deg, #3d97e0, #e8f2fa); }
.pm-radial { background: radial-gradient(circle, #3d97e0 30%, #cfe5f6 100%); }
.pm-mesh { background: linear-gradient(135deg, #3d97e0 0, #fff 50%, #3d97e0 100%); }
.pm-pattern { background: radial-gradient(circle, #f0f0f0 48%, #2a2a2a 55%) 0 0 / 5.330px 5.330px; }
.pm-swatch { background: #3d97e0; border: 2px solid #2a2a2a; outline: 1.500px solid #eee; outline-offset: -.500px; }
.pm-unset { font-size: 18px; font-weight: 700; color: #eee; }
.mode-spring { flex: 1; }
.rule-a, .rule-b { width: 26px; height: 26px; display: flex; align-items: center; justify-content: center; flex: none; }
.rule-a { margin-right: 2px; }
.rule-b { background: #2a4373; border-radius: 5px; }
.rule-ic { width: 20px; height: 20px; }
.nopaint { flex: none; margin: 4px 0 0 7px; font-size: 11px; font-weight: 700; color: #eee; letter-spacing: .3px; line-height: 16px; }
.pane-spring { flex: 1; }
.blend { flex: none; height: 32px; display: flex; align-items: center; justify-content: flex-end; padding-right: 2px; margin-bottom: 5px; }
.blend-label { font-size: 12px; letter-spacing: .6px; margin-right: 5px; color: #d4d4d4; }
.dd-blend { width: 86px; height: 32px; padding: 0 10px 0 12px; font-size: 12px; letter-spacing: 1px; }
.slider { flex: none; width: 346px; margin-left: 3px; height: 26px; margin-bottom: 5px; display: flex; align-items: center; background: #2b2b2b; border: 1px solid #242424; border-radius: 4px; }
.slide-bar { width: 267px; height: 100%; display: flex; align-items: center; padding-left: 2px; font-size: 12px; letter-spacing: .4px; }
.bar-off { background: #262626; border-left: 2px solid #101820; }
.bar-on { background: #27539b; color: #eee; border: 1px solid #14294d; }
.slide-val { flex: 1; font-size: 13px; letter-spacing: .8px; padding-left: 7px; color: #e2e2e2; }
.slider .pm { width: 12px; height: 12px; margin: 0 2px; }
.slider:last-child { margin-bottom: 0; }
.red-box { position: absolute; left: -8px; top: 41px; width: 92px; height: 30px; border: 2px solid #e4402a; }
.red-arrow { position: absolute; left: 35px; top: 111px; width: 44px; height: 40px; }

.palette { flex: none; height: 33px; display: flex; background: #2e2e2e; }
.no-color { width: 33px; height: 33px; margin-left: 1px; background: #fff; flex: none; }
.nc { width: 33px; height: 33px; display: block; }
.swatches { margin-left: 1px; display: grid; grid-template-columns: repeat(18, 25.950px) repeat(8, 25.125px) repeat(28, 25px); grid-template-rows: 16px 16px; row-gap: 1px; width: 1369px; flex: none; }
.swatches i { display: block; margin-right: 1px; }
.pal-ctrl { flex: 1; display: flex; align-items: flex-start; }
.pal-chev { width: 13px; height: 8px; flex: none; }
.pc-up { margin: 13px 0 0 4px; }
.pc-down { margin: 12px 0 0 10px; }
.pal-menu { width: 14px; height: 13px; margin: 13px 0 0 8px; flex: none; }

.status { flex: 1; display: flex; align-items: center; background: #2e2e2e; font-size: 12px; min-height: 0; }
.fs-ind { width: 147px; flex: none; display: flex; flex-direction: column; gap: 1px; margin-top: 2px; }
.fs-row { display: flex; align-items: center; height: 17px; letter-spacing: .6px; }
.fs-l { width: 32px; flex: none; }
.fs-m { width: 36px; flex: none; font-size: 12px; }
.fs-v { width: 42px; flex: none; }
.fs-w { font-size: 13px; letter-spacing: .7px; }
.st-o { width: 19px; flex: none; font-size: 13px; letter-spacing: .5px; }
.sp-op { width: 71px; padding: 0 1px 0 7px; }
.layer-bar { width: 2px; height: 16px; margin-left: 24px; background: #4a7fd8; flex: none; }
.layer-name { margin-left: 7px; width: 44px; flex: none; letter-spacing: .8px; font-size: 12px; }
.eye { width: 15px; height: 12px; margin-left: 10px; flex: none; }
.st-lock { width: 18px; height: 18px; margin-left: 20px; flex: none; }
.msg { margin-left: 18px; white-space: nowrap; letter-spacing: .25px; font-size: 12px; color: #d2d2d2; flex: none; }
.msg b { font-weight: 700; }
.st-spring { flex: 1; }
.coords { width: 72px; flex: none; margin-right: 13px; letter-spacing: .8px; font-size: 12px; }
.co-row { display: flex; justify-content: space-between; height: 15px; line-height: 15px; }
.st-lab { flex: none; letter-spacing: .7px; font-size: 12px; }
.lab-zoom { width: 33px; }
.lab-rot { width: 32px; margin-left: 10px; }
.sp-zoom { width: 89px; padding: 0 1px 0 9px; }
.sp-zoom .val { letter-spacing: .5px; }
.sp-rot { width: 98px; margin-right: 10px; padding: 0 1px 0 15px; }
```
